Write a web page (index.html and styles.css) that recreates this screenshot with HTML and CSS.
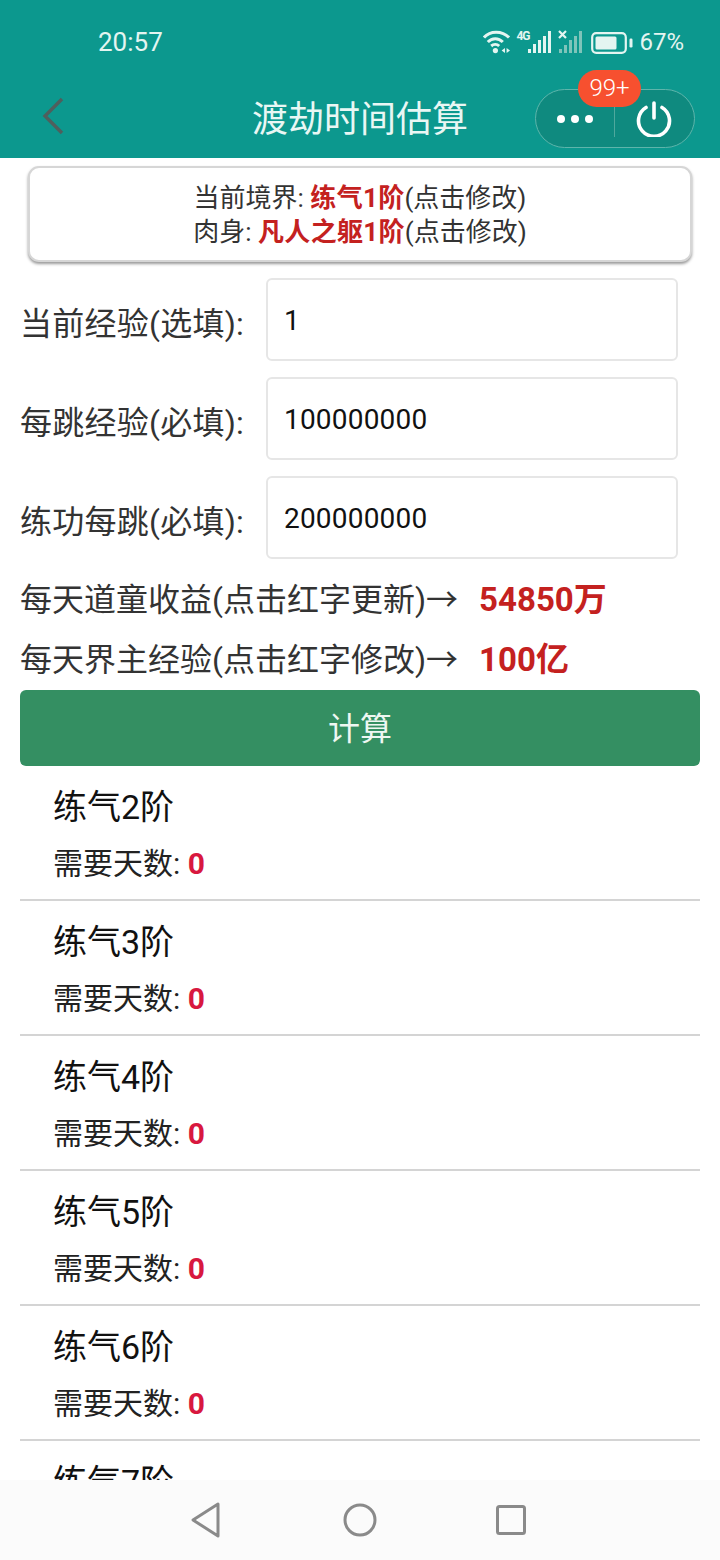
FILE: index.html
```html
<!DOCTYPE html>
<html lang="zh-CN">
 <head>
  <meta charset="utf-8">
  <title>渡劫时间估算</title>
  <link rel="stylesheet" href="styles.css">
 </head>
 <body>
  <div id="pageContainer">

   <div class="statusBar">
    <span class="clock">20:57</span>
    <div class="statusIcons">
     <svg class="wifi" width="28" height="24" viewBox="0 0 28 24" fill="none" stroke="#e4f5f1" stroke-width="3">
      <path d="M1 7.5C7 .5 19 .5 26 7.5"/>
      <path d="M4.8 12C9 7.5 15.5 7.5 19.8 12"/>
      <path d="M8.2 16C10.5 14 14 14 16.2 16"/>
      <circle cx="12.4" cy="20.6" r="2.6" fill="#e4f5f1" stroke="none"/>
      <path d="M22 18v5l-3.4-2.5zM23.6 18v5l3.4-2.5z" fill="#e4f5f1" stroke="none"/>
     </svg>
     <span class="netType">4G</span>
     <svg class="bars" width="24" height="24" viewBox="0 0 24 24" fill="#e4f5f1">
      <rect x="0" y="19" width="3" height="4"/><rect x="5" y="14" width="3" height="9"/><rect x="10" y="10" width="3" height="13"/><rect x="15" y="6" width="3" height="17"/><rect x="20" y="1" width="3" height="22"/>
     </svg>
     <svg class="bars off" width="25" height="24" viewBox="0 0 25 24">
      <path d="M1 1l7 7M8 1l-7 7" stroke="#e4f5f1" stroke-width="2.2"/>
      <g fill="#7fc4ba"><rect x="1" y="19" width="3" height="4"/><rect x="6" y="15" width="3" height="8"/><rect x="11" y="10" width="3" height="13"/><rect x="16" y="6" width="3" height="17"/><rect x="21" y="1" width="3" height="22"/></g>
     </svg>
     <svg class="battery" width="42" height="22" viewBox="0 0 42 22">
      <rect x="1.2" y="1.2" width="33.6" height="19.6" rx="4" fill="none" stroke="#e4f5f1" stroke-width="2.2"/>
      <rect x="4.5" y="4.5" width="21" height="13" rx="1.5" fill="#e4f5f1"/>
      <rect x="38.5" y="6.5" width="3" height="9" rx="1.2" fill="#e4f5f1"/>
     </svg>
     <span class="percent">67%</span>
    </div>
   </div>

   <div class="navBar">
    <svg class="backIcon" width="24" height="38" viewBox="0 0 24 38" fill="none" stroke="#4f5f5d" stroke-width="3.4">
     <path d="M20 2L3 19l17 17"/>
    </svg>
    <h1 class="navTitle">渡劫时间估算</h1>
    <div class="capsule">
     <span class="badge">99+</span>
     <div class="capsuleHalf">
      <i class="dot"></i><i class="dot"></i><i class="dot"></i>
     </div>
     <div class="capsuleHalf power">
      <svg width="36" height="36" viewBox="0 0 36 36" fill="none" stroke="#fff" stroke-width="3.6" stroke-linecap="round">
       <path d="M18 2v15"/>
       <path d="M10 6.5a15.5 15.5 0 1 0 16 0"/>
      </svg>
     </div>
    </div>
   </div>

   <div class="content">
    <div class="realmCard">
     <div>当前境界: <b>练气1阶</b>(点击修改)</div>
     <div>肉身: <b>凡人之躯1阶</b>(点击修改)</div>
    </div>

    <div class="formRow">
     <label>当前经验(选填):</label>
     <div class="field">1</div>
    </div>
    <div class="formRow">
     <label>每跳经验(必填):</label>
     <div class="field">100000000</div>
    </div>
    <div class="formRow">
     <label>练功每跳(必填):</label>
     <div class="field">200000000</div>
    </div>

    <div class="infoRow first">每天道童收益(点击红字更新)→<b>54850万</b></div>
    <div class="infoRow">每天界主经验(点击红字修改)→<b>100亿</b></div>

    <div class="calcBtn">计算</div>

    <ul class="resultList">
     <li><h3>练气2阶</h3><p>需要天数: <b>0</b></p></li>
     <li><h3>练气3阶</h3><p>需要天数: <b>0</b></p></li>
     <li><h3>练气4阶</h3><p>需要天数: <b>0</b></p></li>
     <li><h3>练气5阶</h3><p>需要天数: <b>0</b></p></li>
     <li><h3>练气6阶</h3><p>需要天数: <b>0</b></p></li>
     <li><h3>练气7阶</h3><p>需要天数: <b>0</b></p></li>
    </ul>
   </div>

   <div class="sysNav">
    <svg class="navBack" width="32" height="36" viewBox="0 0 32 36" fill="none" stroke="#8a8a8a" stroke-width="3" stroke-linejoin="round">
     <path d="M28 2v32L3 18z"/>
    </svg>
    <svg width="34" height="34" viewBox="0 0 34 34" fill="none" stroke="#8a8a8a" stroke-width="3">
     <circle cx="17" cy="17" r="15"/>
    </svg>
    <svg width="32" height="32" viewBox="0 0 32 32" fill="none" stroke="#8a8a8a" stroke-width="3" stroke-linejoin="round">
     <rect x="2.5" y="2.5" width="27" height="27" rx="2"/>
    </svg>
   </div>

  </div>
 </body>
</html>
```

FILE: styles.css
```css
* {
   box-sizing: border-box;
  }

html, body {
   margin: 0;
   padding: 0;
  }

body {
   font-family: Roboto, "Noto Sans CJK SC", sans-serif;
   color: #333;
   background-color: #fff;
  }

#pageContainer {
   position: relative;
   width: 720px;
   height: 1560px;
   overflow: hidden;
  }

/* status bar */
.statusBar {
   height: 78px;
   background-color: #0c988e;
   color: #e4f5f1;
   display: flex;
   justify-content: space-between;
   align-items: center;
   padding: 6px 36px 0 98px;
  }

.clock {
   font-size: 26px;
  }

.statusIcons {
   display: flex;
   align-items: center;
  }

.netType {
   width: 12px;
   font-size: 12px;
   font-weight: bold;
   letter-spacing: -1px;
   margin: -12px 0 0 5px;
  }

.bars.off {
   margin-left: 6px;
  }

.battery {
   margin: 2px 0 0 8px;
  }

.percent {
   font-size: 24px;
   margin-left: 6px;
  }

/* title bar */
.navBar {
   position: relative;
   height: 80px;
   background-color: #0c988e;
   display: flex;
   align-items: center;
   padding: 0 25px 0 42px;
  }

.backIcon {
   flex: none;
   margin-bottom: 5px;
  }

.navTitle {
   position: absolute;
   left: 0;
   right: 0;
   margin: 0;
   padding-bottom: 5px;
   text-align: center;
   font-size: 36px;
   font-weight: normal;
   color: #e9f7f4;
  }

.capsule {
   position: relative;
   margin-left: auto;
   margin-top: 1px;
   width: 160px;
   height: 59px;
   display: flex;
   align-items: center;
   background-color: #0f8a7f;
   border: 1px solid #5eb5ab;
   border-radius: 30px;
  }

.capsuleHalf {
   width: 79px;
   height: 36px;
   display: flex;
   justify-content: center;
   align-items: center;
   gap: 6px;
  }

.capsuleHalf:first-of-type {
   border-right: 1px solid #4fa89d;
  }

.capsuleHalf.power {
   padding-right: 2px;
  }

.dot {
   width: 8px;
   height: 8px;
   border-radius: 50%;
   background-color: #fff;
  }

.badge {
   position: absolute;
   left: 42px;
   top: -20px;
   width: 63px;
   height: 37px;
   border-radius: 19px;
   background-color: #f7502f;
   color: #fff;
   font-size: 24px;
   font-weight: 300;
   line-height: 37px;
   text-align: center;
  }

/* page body */
.content {
   padding: 8px 20px 0;
  }

.realmCard {
   width: 664px;
   height: 96px;
   margin: 0 auto 16px;
   padding-top: 13px;
   background-color: #fff;
   border: 2px solid #d6d6d6;
   border-radius: 11px;
   box-shadow: 0 2px 3px #999;
   text-align: center;
   font-size: 26px;
   line-height: 34px;
  }

.realmCard b {
   color: #c4211f;
   letter-spacing: 0.3px;
  }

.formRow {
   display: flex;
   align-items: center;
   margin-bottom: 16px;
  }

.formRow label {
   width: 246px;
   padding-top: 2px;
   font-size: 32px;
   letter-spacing: 0.25px;
  }

.field {
   width: 412px;
   height: 83px;
   padding-left: 16px;
   border: 2px solid #e6e6e6;
   border-radius: 6px;
   color: #111;
   font-size: 28px;
   letter-spacing: 0.2px;
   line-height: 82px;
  }

.infoRow {
   display: flex;
   align-items: center;
   height: 60px;
   font-size: 32px;
  }

.infoRow.first {
   margin-top: -8px;
  }

.infoRow b {
   margin-left: 21px;
   font-size: 33px;
   color: #c4211f;
  }

.calcBtn {
   height: 76px;
   margin-top: 3px;
   background-color: #348f62;
   border-radius: 6px;
   color: #eef7f2;
   font-size: 32px;
   line-height: 78px;
   text-align: center;
  }

/* results */
.resultList {
   margin: 0;
   padding: 0;
   list-style-type: none;
  }

.resultList li {
   height: 135px;
   padding: 16px 0 0 33px;
   border-bottom: 2px solid #d4d4d4;
  }

.resultList h3 {
   margin: 0;
   font-size: 34px;
   line-height: 50px;
   font-weight: normal;
   color: #111;
  }

.resultList p {
   margin: 11px 0 0;
   font-size: 30px;
   line-height: 42px;
   color: #222;
  }

.resultList b {
   color: #d8183f;
  }

/* android buttons, sits over the list */
.sysNav {
   position: absolute;
   left: 0;
   right: 0;
   bottom: 0;
   height: 80px;
   padding-right: 3px;
   background-color: #fbfbfb;
   display: flex;
   justify-content: center;
   align-items: center;
   gap: 118px;
  }

.navBack {
   margin-right: 3px;
  }
```
